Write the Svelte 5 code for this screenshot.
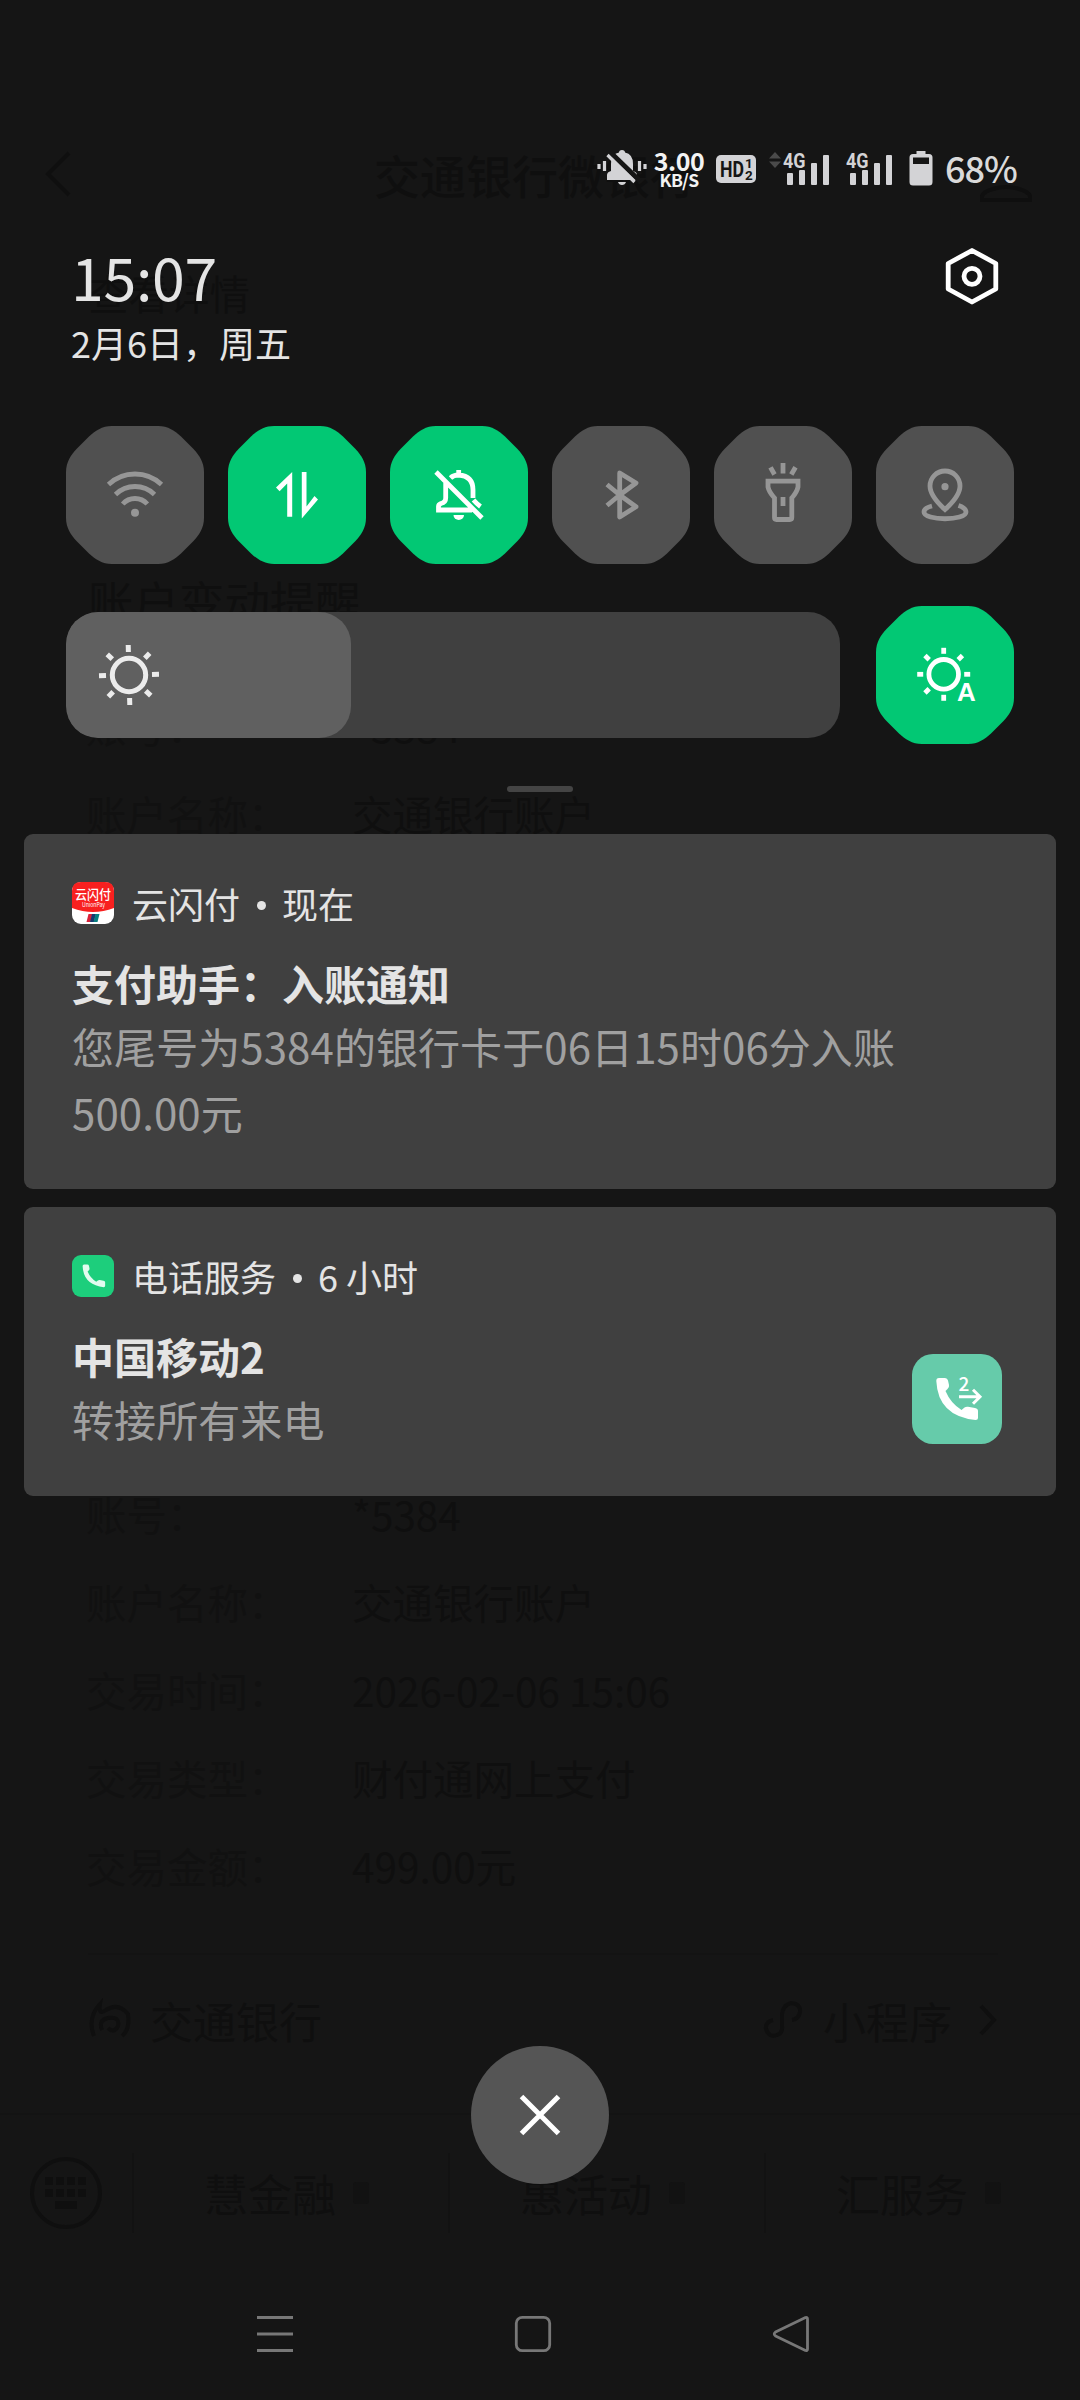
<script>
  const tilePath =
    'M46 0H92C102 0 109 5 115 10.500L127.500 23C133 29 138 36 138 46V92C138 102 133 109 127.500 115L115 127.500C109 133 102 138 92 138H46C36 138 29 133 23 127.500L10.500 115C5 109 0 102 0 92V46C0 36 5 29 10.500 23L23 10.500C29 5 36 0 46 0Z';
  const phonePath =
    'M27 24H33Q35.5 24 36 26.5L37 31Q37.5 33.5 35.5 35L33.5 37Q38.5 49 49.5 56L52.5 53.5Q54 52.5 56 52.8L63 54Q66 54.5 66 57V63.5Q66 66 63.5 66Q26 62 24.3 27Q24.2 24 27 24Z';

  const tiles = [
    { name: 'wifi', on: false },
    { name: 'data', on: true },
    { name: 'mute', on: true },
    { name: 'bluetooth', on: false },
    { name: 'torch', on: false },
    { name: 'location', on: false }
  ];
  const rays = [0, 45, 90, 135, 180, 225, 270, 315];

  const firstDetails = [
    ['账号：', '*5384'],
    ['账户名称：', '交通银行账户']
  ];
  const details = [
    ['账号：', '*5384'],
    ['账户名称：', '交通银行账户'],
    ['交易时间：', '2026-02-06 15:06'],
    ['交易类型：', '财付通网上支付'],
    ['交易金额：', '499.00元']
  ];
  const menus = ['慧金融', '惠活动', '汇服务'];
</script>

{#snippet signal()}
  <svg class="signal" width="48" height="36" viewBox="0 0 48 36">
    <text x="0" y="17" class="net" textLength="22.500" lengthAdjust="spacingAndGlyphs">4G</text>
    <rect x="4" y="22" width="6" height="12" rx="1" />
    <rect x="16" y="19" width="6" height="15" rx="1" />
    <rect x="28" y="12" width="6" height="22" rx="1" />
    <rect x="40" y="4" width="6" height="30" rx="1" />
  </svg>
{/snippet}

<div class="screen">
  <div class="dimmed" aria-hidden="true">
    <header class="page-head">
      <svg width="28" height="48" viewBox="0 0 28 48"><path d="M25 3L4 24L25 45" /></svg>
      <span>交通银行微银行</span>
      <svg width="54" height="52" viewBox="0 0 54 52"><path d="M3 48V44Q4 40 14 37Q20 35 27 35Q34 35 40 37Q50 40 51 44V48Z" /></svg>
    </header>
    <p class="link">查看详情</p>
    <p class="subject">账户变动提醒</p>
    <dl class="early">
      {#each firstDetails as [label, value]}
        <dt>{label}</dt><dd>{value}</dd>
      {/each}
    </dl>
    <dl class="late">
      {#each details as [label, value]}
        <dt>{label}</dt><dd>{value}</dd>
      {/each}
    </dl>
    <div class="source">
      <svg width="44" height="44" viewBox="0 0 44 44"><path d="M6 38Q-1 20 12 6Q10 18 18 12Q30 4 40 16Q42 32 34 38M14 32Q10 22 20 20Q32 18 30 28Q26 36 20 30" /></svg>
      <span>交通银行</span>
      <svg class="mini" width="44" height="44" viewBox="0 0 44 44"><path d="M12 22Q4 24 5 31Q8 40 16 37Q22 35 21 28V16Q22 7 30 5Q40 6 39 14Q38 21 31 22" /></svg>
      <span>小程序</span>
      <svg class="more" width="20" height="36" viewBox="0 0 20 36"><path d="M3 4L16 18L3 32" /></svg>
    </div>
    <div class="menu-bar">
      <svg class="keyboard" width="76" height="76" viewBox="0 0 76 76">
        <circle cx="38" cy="38" r="34" />
        <path class="keys" stroke-dasharray="8 3" d="M17 26H59M17 38H59" /><path class="keys" d="M27 50H49" />
      </svg>
      {#each menus as menu}
        <div class="menu"><span>{menu}</span><i></i></div>
      {/each}
    </div>
  </div>

  <div class="shade">
    <div class="status">
      <svg class="silent" width="50" height="38" viewBox="0 0 50 38">
        <path d="M10 31V26Q10 23 14 22V15Q14 5 22 3.5Q22 1 25 1Q28 1 28 3.5Q36 5 36 15V22Q40 23 40 26V31ZM21 33H29Q28 36 25 36Q22 36 21 33Z" />
        <path class="cut" d="M13 3L43 32" />
        <path class="line" d="M10.500 6L37.500 33M2 15V20M7.500 12V22M42.500 12V22M48 15V20" />
      </svg>
      <div class="rate"><b>3.00</b><span>KB/S</span></div>
      <svg class="hd" width="40" height="28" viewBox="0 0 40 28">
        <rect width="40" height="28" rx="5" />
        <text x="4" y="22" class="hd-text" textLength="24" lengthAdjust="spacingAndGlyphs">HD</text>
        <text x="29" y="13" class="hd-num">1</text>
        <text x="29" y="25" class="hd-num">2</text>
      </svg>
      <svg class="updown" width="12" height="16" viewBox="0 0 12 16"><path d="M0 6.500L6 0L12 6.500ZM0 9.500L6 16L12 9.500Z" /></svg>
      {@render signal()}
      {@render signal()}
      <svg class="battery" width="24" height="36" viewBox="0 0 24 36">
        <path fill-rule="evenodd" d="M7.500 1H16.500V4H20Q23.500 4 23.500 7.500V32Q23.500 35.500 20 35.500H4Q.5 35.500 .5 32V7.500Q.5 4 4 4H7.500ZM4 7.500V14H20V7.500Z" />
      </svg>
      <span class="percent">68%</span>
    </div>

    <div class="head">
      <div>
        <div class="time">15:07</div>
        <div class="date">2月6日，周五</div>
      </div>
      <svg class="settings" width="60" height="60" viewBox="0 0 60 60">
        <path d="M30 4.500L53.800 17.500V43L30 56L6.200 43V17.500Z" />
        <circle cx="30" cy="30.300" r="8" />
      </svg>
    </div>

    <div class="tiles">
      {#each tiles as tile}
        <svg class="tile" class:on={tile.on} width="138" height="138" viewBox="0 0 138 138">
          <path class="base" d={tilePath} />
          {#if tile.name === 'wifi'}
            <path d="M42.500 58.500A38.700 38.700 0 0 1 95.500 58.500M49.500 68.500A27.800 27.800 0 0 1 88.500 68.500M56.700 78A16.500 16.500 0 0 1 81.300 78" />
            <circle class="solid" cx="69" cy="86.700" r="4" />
          {:else if tile.name === 'data'}
            <path class="solid" d="M48 61.500L64.200 46V90.700H59.200V57.500L51.600 65.200ZM73.800 46H78.500V80.500L86.500 70L90 73.500L73.800 92.500Z" />
          {:else if tile.name === 'mute'}
            <path d="M46 46L92 92M68.700 44V49M55.700 57V72Q55.700 76.500 51 77.500Q48.500 78.500 48.500 80.500V84H82M60.500 52Q63.500 49 68.700 49Q83 50 83 64V72M83.500 74Q87 78 90.500 80.500" />
            <path class="solid" d="M63.500 89H74A5.200 5 0 0 1 63.500 89Z" />
          {:else if tile.name === 'bluetooth'}
            <path stroke-linejoin="round" d="M55 58.500L67.700 69L84 80.800L67.700 91V47L84 57L67.700 69L55 79.500" />
          {:else if tile.name === 'torch'}
            <path d="M69 37V47.500M56.500 41.300L60.500 48.500M81.500 41.300L77.300 48.500M69 71V80M54 55.200H84V61Q83 66 77.800 72V91.500Q77.800 93.500 75.800 93.500H62.500Q60.500 93.500 60.500 91.500V72Q55 66 54 61Z" />
          {:else}
            <path d="M69 83.500Q54 70 54 60A15 15 0 0 1 84 60Q84 70 69 83.500ZM56 80Q48 82 48 86C48 95 90 95 90 86Q90 82 82.500 79.500" />
            <circle class="solid" cx="69" cy="60.700" r="3.600" />
          {/if}
        </svg>
      {/each}
    </div>

    <div class="brightness">
      <div class="track">
        <div class="level">
          <svg width="64" height="64" viewBox="-32 -32 64 64">
            <circle r="16.700" />
            {#each rays as angle}
              <path transform="rotate({angle - 1.5})" d="M0 -23V-30" />
            {/each}
          </svg>
        </div>
      </div>
      <svg class="tile on" width="138" height="138" viewBox="0 0 138 138">
        <path class="base" d={tilePath} />
        <g transform="translate(67.700 68.300)">
          <circle class="ring" r="14.800" />
          {#each rays.filter((a) => a !== 135) as angle}
            <path transform="rotate({angle})" d="M0 -20.500V-26.500" />
          {/each}
        </g>
        <text class="auto" x="81" y="95">A</text>
      </svg>
    </div>

    <div class="grip"></div>

    <article class="card first">
      <div class="app">
        <svg width="42" height="42" viewBox="0 0 42 42">
          <rect width="42" height="42" rx="9" fill="#fff" />
          <path d="M0 26V9Q0 0 9 0H33Q42 0 42 9V26Q21 34 0 26Z" fill="#f8201f" />
          <text x="3" y="17" class="brand" textLength="36" lengthAdjust="spacingAndGlyphs">云闪付</text>
          <text x="10" y="25" class="brand-sub" textLength="23" lengthAdjust="spacingAndGlyphs">UnionPay</text>
          <path d="M16.500 32H20.500L18.500 40H14.500Z" fill="#d9223a" />
          <path d="M20 32H24L22 40H18Z" fill="#173a70" />
          <path d="M23.500 32H27.500L25.500 40H21.500Z" fill="#087f80" />
        </svg>
        <span>云闪付</span><i class="dot"></i><span>现在</span>
      </div>
      <h2>支付助手：入账通知</h2>
      <p>您尾号为5384的银行卡于06日15时06分入账<br />500.00元</p>
    </article>

    <article class="card second">
      <div>
        <div class="app">
          <svg width="42" height="42" viewBox="0 0 42 42">
            <rect width="42" height="42" rx="9" fill="#1dce7c" />
            <path transform="translate(-2.500 -3.500) scale(.54)" d={phonePath} fill="#e2fbef" />
          </svg>
          <span>电话服务</span><i class="dot"></i><span>6 小时</span>
        </div>
        <h2>中国移动2</h2>
        <p>转接所有来电</p>
      </div>
      <svg class="forward" width="90" height="90" viewBox="0 0 90 90">
        <rect width="90" height="90" rx="21" fill="#66cbaa" />
        <path d={phonePath} fill="#fff" />
        <path class="arrow" d="M47 42.700H68M61 35.700L68 42.700L61 49.700" />
        <text x="46.500" y="37">2</text>
      </svg>
    </article>

    <button class="close" aria-label="清除">
      <svg width="44" height="44" viewBox="0 0 44 44"><path d="M3.500 3.500L40.500 40.500M40.500 3.500L3.500 40.500" /></svg>
    </button>

    <nav>
      <svg width="40" height="40" viewBox="0 0 40 40"><path d="M2 3.500H38M2 20H38M2 36.500H38" /></svg>
      <svg width="40" height="40" viewBox="0 0 40 40"><rect x="3.300" y="3.300" width="33.400" height="33.400" rx="6" /></svg>
      <svg width="40" height="40" viewBox="0 0 40 40"><path stroke-linejoin="round" d="M34.500 3.500Q36.500 3 36.500 5V35Q36.500 37 34.500 36.500L4.500 22Q2 20 4.500 18Z" /></svg>
    </nav>
  </div>
</div>

<style>
  :global(body) {
    margin: 0;
    background: #151515;
  }
  .screen {
    display: grid;
    grid-template: 2400px / 1080px;
    width: 1080px;
    height: 2400px;
    overflow: hidden;
    background: #151515;
    font-family: 'Noto Sans CJK SC', sans-serif;
    color: #e4e4e4;
  }
  .dimmed,
  .shade {
    grid-area: 1 / 1;
    display: flex;
    flex-direction: column;
    box-sizing: border-box;
    width: 1080px;
    height: 2400px;
  }
  svg {
    display: block;
    flex: none;
    fill: none;
    overflow: visible;
  }
  p,
  h2,
  dl,
  dd {
    margin: 0;
  }

  /* chat page under the shade */
  .dimmed {
    color: #0f0f0f;
    font-size: 40.500px;
  }
  .dimmed svg {
    stroke: #0f0f0f;
    stroke-width: 4;
  }
  .page-head {
    display: flex;
    align-items: center;
    height: 96px;
    margin-top: 126px;
    padding: 0 47px 0 44px;
    font-size: 46px;
    font-weight: 500;
    line-height: 60px;
  }
  .page-head span {
    margin-left: 302px;
  }
  .page-head svg:last-child {
    align-self: flex-end;
    margin-bottom: 18px;
    margin-left: auto;
  }
  .link {
    margin: 41px 0 0 88px;
    line-height: 60px;
  }
  .subject {
    margin: 245px 0 0 88px;
    font-size: 45.500px;
    line-height: 64px;
  }
  dl {
    display: grid;
    grid-template-columns: 264px 1fr;
    grid-auto-rows: 88px;
    padding-left: 88px;
    line-height: 88px;
  }
  dt {
    color: #111;
    margin-left: -2px;
  }
  .early {
    margin-top: 50px;
  }
  .late {
    margin-top: 612px;
    padding-bottom: 43px;
  }
  .source {
    display: flex;
    align-items: center;
    height: 130px;
    margin: 0 82px 0 88px;
    border-top: 2px solid #131313;
    font-size: 43px;
  }
  .source span {
    margin-left: 18px;
  }
  .source .mini {
    margin-left: auto;
  }
  .source .more {
    margin-left: 26px;
  }
  .menu-bar {
    display: flex;
    align-items: center;
    margin-top: 28px;
    padding: 38px 0 0 28px;
    border-top: 2px solid #131313;
    font-size: 44px;
  }
  .keyboard {
    margin-right: 28px;
  }
  .dimmed .keys {
    stroke-width: 8;
  }
  .menu {
    display: flex;
    flex: 1;
    align-items: center;
    gap: 17px;
    box-sizing: border-box;
    height: 80px;
    padding-left: 70px;
    border-left: 2px solid #121212;
  }
  .menu i {
    width: 16px;
    height: 22px;
    border-radius: 3px;
    background: #121212;
  }

  /* status bar */
  .status {
    display: flex;
    align-items: center;
    height: 40px;
    margin-top: 149px;
    padding-left: 597px;
  }
  .silent {
    fill: #d3d3d6;
    margin-top: -2px;
  }
  .silent .cut {
    stroke: #151515;
    stroke-width: 5;
  }
  .silent .line {
    stroke: #d3d3d6;
    stroke-width: 3.200;
  }
  .rate {
    display: flex;
    flex-direction: column;
    align-items: center;
    width: 56px;
    margin-left: 4px;
    color: #f3f3f3;
    white-space: nowrap;
  }
  .rate b {
    font-size: 25px;
    font-weight: 700;
    line-height: 21px;
    letter-spacing: -0.500px;
  }
  .rate span {
    font-size: 17.500px;
    font-weight: 700;
    line-height: 17px;
    letter-spacing: -0.700px;
  }
  .hd {
    margin-left: 9px;
    fill: #d3d3d6;
  }
  .hd-text {
    fill: #151515;
    font-family: Roboto, sans-serif;
    font-size: 22px;
    font-weight: 700;
  }
  .hd-num {
    fill: #151515;
    font-family: Roboto, sans-serif;
    font-size: 13.500px;
    font-weight: 700;
  }
  .updown {
    align-self: flex-start;
    margin: 3px 0 0 13px;
    fill: #4a4a4a;
  }
  .signal {
    margin-left: 2px;
    fill: #d3d3d6;
  }
  .signal + .signal {
    margin-left: 15px;
  }
  .net {
    font-family: Roboto, sans-serif;
    font-size: 21px;
    font-weight: 700;
  }
  .battery {
    margin: -2px 0 0 15px;
    fill: #d3d3d6;
  }
  .percent {
    margin-left: 12px;
    color: #dadada;
    font-size: 36px;
    font-weight: 500;
    line-height: 40px;
    margin-top: -5px;
    letter-spacing: -1px;
  }

  /* clock */
  .head {
    display: flex;
    justify-content: space-between;
    height: 122px;
    margin-top: 57px;
    padding: 0 78px 0 71px;
  }
  .time {
    font-size: 59px;
    line-height: 60px;
    letter-spacing: -0.300px;
  }
  .date {
    margin-top: 11px;
    font-size: 36px;
    line-height: 50px;
  }
  .settings {
    stroke: #fff;
    stroke-width: 4.800;
    stroke-linejoin: round;
  }

  /* quick settings */
  .tiles {
    display: flex;
    gap: 24px;
    margin: 58px 66px 0;
  }
  .tile {
    stroke: #969696;
    stroke-width: 4.800;
  }
  .tile.on {
    stroke: #fff;
  }
  .tile .base {
    fill: #505050;
    stroke: none;
  }
  .tile.on .base {
    fill: #02c874;
  }
  .tile .solid {
    fill: #969696;
    stroke: none;
  }
  .tile.on .solid {
    fill: #fff;
  }
  .auto {
    fill: #fff;
    stroke: none;
    font-family: 'Liberation Sans', sans-serif;
    font-size: 26px;
    font-weight: 700;
  }
  .brightness {
    display: flex;
    align-items: center;
    gap: 36px;
    margin: 42px 66px 0;
  }
  .track {
    flex: 1;
    height: 126px;
    overflow: hidden;
    border-radius: 32px;
    background: #404040;
  }
  .level {
    display: flex;
    align-items: center;
    box-sizing: border-box;
    width: 285px;
    height: 126px;
    padding-left: 31px;
    border-radius: 32px;
    background: #606060;
  }
  .level svg {
    stroke: #ececec;
    stroke-width: 5;
  }
  .grip {
    width: 66px;
    height: 6px;
    margin: 42px auto 0;
    border-radius: 3px;
    background: #444;
  }

  /* notifications */
  .card {
    box-sizing: border-box;
    margin: 0 24px;
    padding: 48px 54px 0 48px;
    border-radius: 9px;
    background: #404040;
  }
  .first {
    height: 355px;
    margin-top: 42px;
  }
  .second {
    display: flex;
    justify-content: space-between;
    height: 289px;
    margin-top: 18px;
  }
  .app {
    display: flex;
    align-items: center;
    height: 42px;
    font-size: 36px;
    line-height: 40px;
  }
  .app span {
    margin-top: -1px;
  }
  .app svg {
    margin-right: 18px;
  }
  .dot {
    width: 9px;
    height: 9px;
    margin: 4px 16px 0 17px;
    border-radius: 50%;
    background: #e4e4e4;
  }
  .brand {
    fill: #fff;
    font-size: 13px;
    font-weight: 500;
  }
  .brand-sub {
    fill: #fff;
    font-size: 6px;
  }
  .card h2 {
    margin-top: 29px;
    font-size: 42px;
    font-weight: 700;
    line-height: 60px;
  }
  .card p {
    color: #a0a0a0;
    font-size: 42px;
    line-height: 66px;
    letter-spacing: 0.080px;
  }
  .forward {
    margin-top: 99px;
  }
  .forward .arrow {
    stroke: #fff;
    stroke-width: 3;
  }
  .forward text {
    fill: #fff;
    font-size: 19px;
    font-weight: 500;
  }

  .close {
    display: grid;
    place-items: center;
    flex: none;
    width: 138px;
    height: 138px;
    margin: 550px auto 0;
    padding: 0;
    border: 0;
    border-radius: 50%;
    background: #555;
  }
  .close svg {
    stroke: #fff;
    stroke-width: 5;
  }
  nav {
    display: flex;
    gap: 218px;
    margin: 130px 0 0 255px;
  }
  nav svg {
    stroke: #777;
    stroke-width: 2.800;
  }
</style>
